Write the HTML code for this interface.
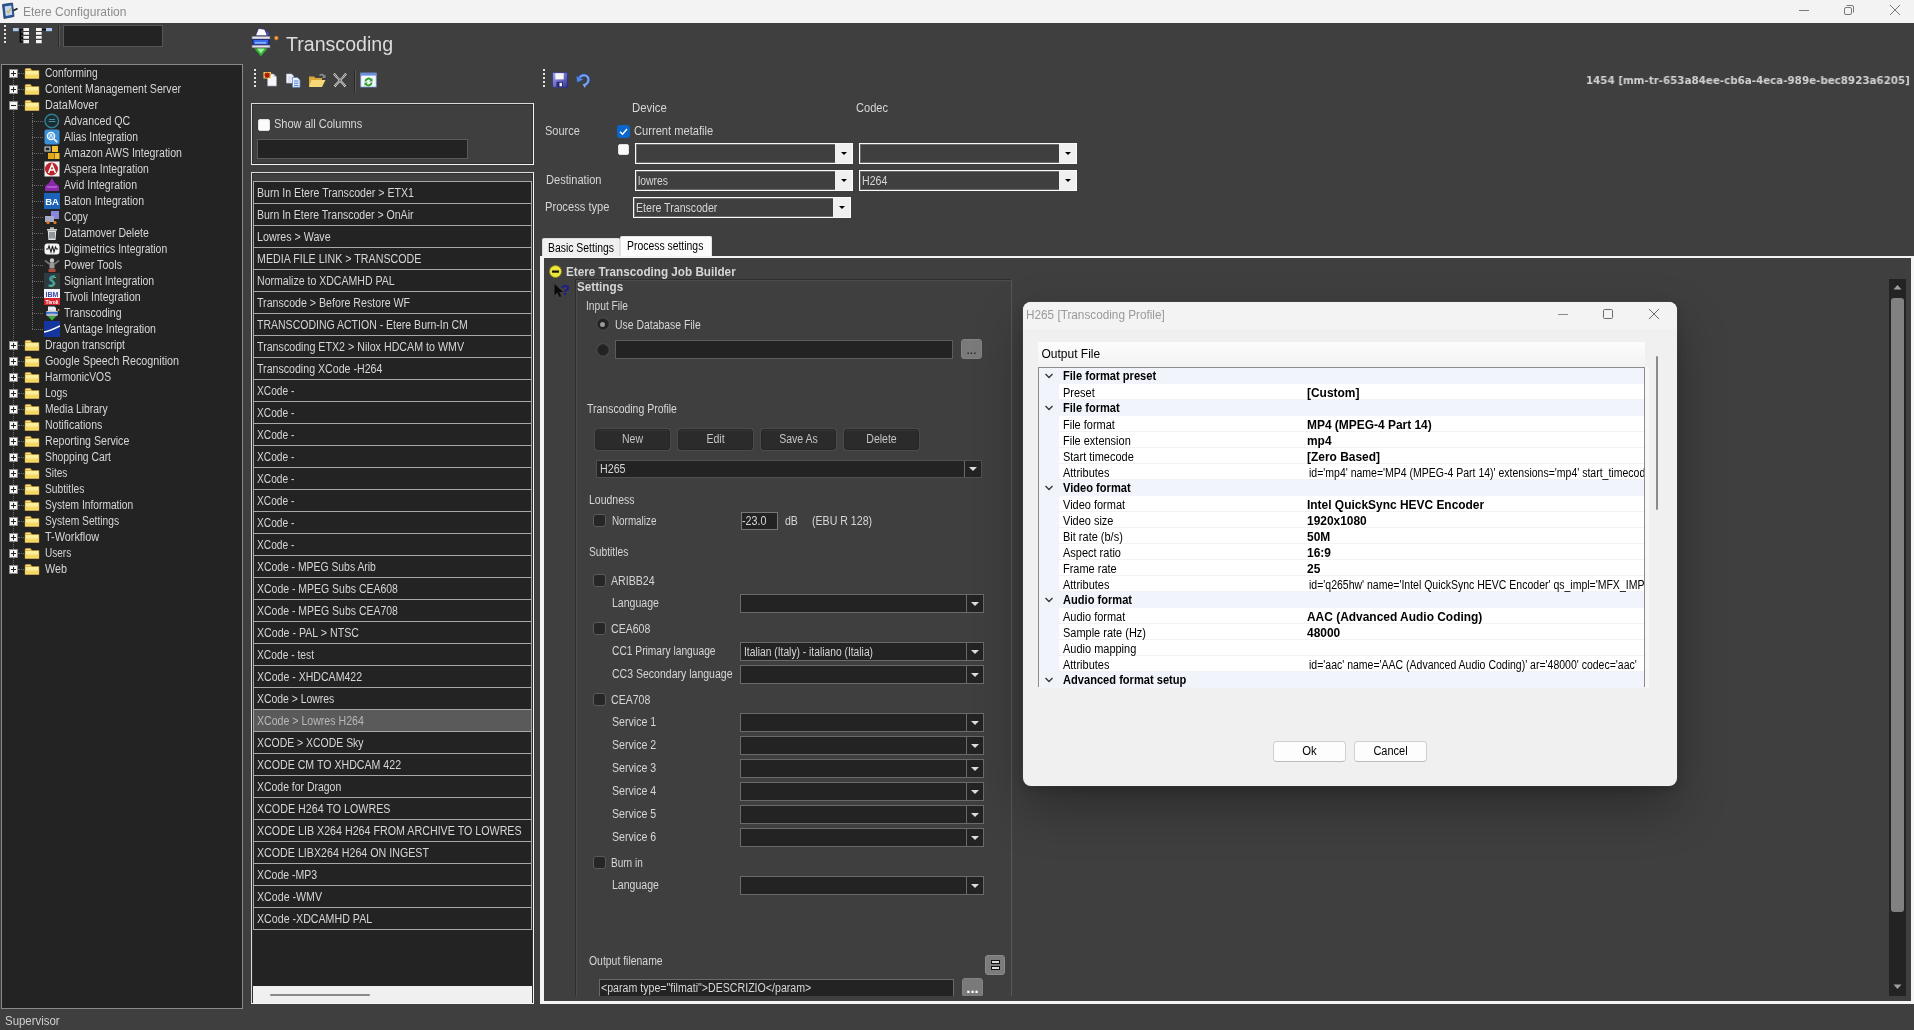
<!DOCTYPE html>
<html lang="en"><head><meta charset="utf-8"><title>Etere Configuration</title>
<style>
*{box-sizing:border-box;margin:0;padding:0}
html,body{width:1914px;height:1030px;overflow:hidden;background:#3f3f3f}
body{position:relative;font-family:"Liberation Sans",sans-serif;font-size:12px;color:#d6d6d6}
div,span,svg{position:absolute}
#app{left:0;top:0;width:1914px;height:1030px;will-change:transform}
.t{white-space:nowrap;line-height:16px;font-size:12px;transform:scaleX(0.878);transform-origin:0 50%;color:#d6d6d6}
.tb{white-space:nowrap;line-height:16px;font-size:12px;font-weight:bold;transform:scaleX(.975);transform-origin:0 50%;color:#d6d6d6}
.s{white-space:nowrap;line-height:16px;font-size:12px;color:#000}
.sb{white-space:nowrap;line-height:16px;font-size:12px;font-weight:bold;color:#000;transform-origin:0 50%}
.dk{background:#232323}
.cb{background:#262626;border:1px solid #5a5a5a;border-radius:3px}
.cbw{background:#fafafa;border-radius:2px;border:1px solid #e0e0e0}
.cmb{background:#3f3f3f;border:1px solid #fafafa;box-shadow:inset 0 0 0 1px rgba(255,255,255,.22)}
.cmb i{position:absolute;right:0;top:0;bottom:0;width:17px;background:#f0f0f0}
.cmb i:after,.dc i:after{content:"";position:absolute;left:50%;top:50%;margin:-1.500px 0 0 -3px;border:3px solid transparent;border-bottom-width:0;border-top-color:#000}
.dc{background:#232323;border:1px solid #6a6a6a}
.dc i{position:absolute;right:0;top:0;bottom:0;width:17px;border-left:1px solid #6a6a6a}
.dc i:after{border-top-color:#ddd;border-width:4px 4px 0;margin:-2px 0 0 -4px}
.btn{background:#2b2b2b;border:1px solid #262626;border-radius:3px;box-shadow:0 0 0 1px #4b4b4b,inset 0 1px 0 #353535}
.row{background:#232323;border:1px solid #a8a8a8}
.pm{width:9px;height:9px;background:#f4f4f4;border:1px solid #888}
.pm:before{content:"";position:absolute;left:1px;top:3px;width:5px;height:1px;background:#222}
.pl:after{content:"";position:absolute;left:3px;top:1px;width:1px;height:5px;background:#222}
.hd{border-top:1px dotted #6c6c6c;height:0}
.vd{border-left:1px dotted #6c6c6c;width:0}
.cat{background:#f1f4fa}
.wbtn{background:#fdfdfd;border:1px solid #d0d0d0;border-radius:4px;border-bottom-color:#bcbcbc}
</style></head>
<body>
<div id="app">
<div class="" style="left:0px;top:0px;width:1914px;height:23px;background:#f3f3f3"></div>
<svg style="left:1px;top:2px" width="18" height="18" viewBox="0 0 18 18"><path d="M1.500 2.500L11.500 1 13 14.500 3 16.500Z" fill="#2c5490" stroke="#1c3a6a" stroke-width=".8"/><path d="M3.600 4.600L10.300 3.600 11.300 12.800 4.800 14Z" fill="#c4d8f4"/><path d="M5.500 8.500L7.300 10.800 9.800 6.200" stroke="#c8b850" stroke-width="1.200" fill="none"/><path d="M12.500 8.500L16.500 6.500" stroke="#1a1a2a" stroke-width="1.700"/></svg>
<span class="s" style="left:23px;top:3.5px;color:#8c8c8c">Etere Configuration</span>
<svg style="left:1798px;top:5px" width="12" height="12" viewBox="0 0 12 12"><path d="M1 5.5H11" stroke="#7a7a7a" stroke-width="1"/></svg>
<svg style="left:1843px;top:4px" width="12" height="12" viewBox="0 0 12 12"><rect x="1.5" y="3.5" width="7" height="7" rx="1.5" fill="none" stroke="#7a7a7a"/><path d="M3.5 1.5H9Q10.5 1.5 10.5 3V8.5" fill="none" stroke="#7a7a7a"/></svg>
<svg style="left:1889px;top:4px" width="12" height="12" viewBox="0 0 12 12"><path d="M1 1L11 11M11 1L1 11" stroke="#7a7a7a" stroke-width="1"/></svg>
<div class="" style="left:4px;top:25px;width:2px;height:2px;background:#e4e4e4"></div>
<div class="" style="left:4px;top:29px;width:2px;height:2px;background:#e4e4e4"></div>
<div class="" style="left:4px;top:33px;width:2px;height:2px;background:#e4e4e4"></div>
<div class="" style="left:4px;top:37px;width:2px;height:2px;background:#e4e4e4"></div>
<div class="" style="left:4px;top:41px;width:2px;height:2px;background:#e4e4e4"></div>
<svg style="left:13px;top:27px" width="17" height="17" viewBox="0 0 17 17"><rect x="0" y="1" width="5.700" height="3.200" fill="#a8c8f0"/><path d="M7.300 2V15.500M6.700 2.600H10.400M7 7H10.400M7 11H10.400M7 14.900H10.400" stroke="#050505" stroke-width="1.300" fill="none"/><path d="M10.400 1H16V4H10.400ZM10.400 5H16V7.800H10.400ZM10.400 9H16V11.800H10.400ZM10.400 13H16V16.300H10.400Z" fill="#f4f4f4"/></svg>
<svg style="left:36px;top:27px" width="17" height="17" viewBox="0 0 17 17"><path d="M0 1H5.700V4H0ZM0 5H5.700V7.800H0ZM0 9H5.700V11.800H0ZM0 13H5.700V16.300H0Z" fill="#f4f4f4"/><path d="M6 2.600H10" stroke="#050505" stroke-width="1.300"/><rect x="10" y="1" width="6" height="3.200" fill="#a8c8f0"/></svg>
<div class="" style="left:58px;top:25px;width:1px;height:22px;background:#2a2a2a"></div>
<div class="" style="left:59px;top:25px;width:1px;height:22px;background:#555"></div>
<div class="dk" style="left:63px;top:25px;width:100px;height:22px;border:1px solid #555"></div>
<div class="dk" style="left:1px;top:64px;width:242px;height:945px;border:1px solid #8a8a8a"></div>
<div class="vd" style="left:13px;top:73px;width:0px;height:496px;"></div>
<div class="vd" style="left:32px;top:113px;width:0px;height:216px;"></div>
<div class="hd" style="left:18px;top:73px;width:6px;height:0px;"></div>
<div class="pm pl" style="left:9px;top:69px;width:9px;height:9px;"></div>
<svg style="left:24px;top:65px" width="16" height="16" viewBox="0 0 16 16"><path d="M.8 4.200V13.800H15.200V5.300H8L6.500 3.200H1.800Z" fill="#d4a83a"/><path d="M1.500 6H14.500V13.200H1.500Z" fill="#fbeea0"/><path d="M1.500 9.500H14.500V13.200H1.500Z" fill="#f4d866"/><path d="M1.800 3.800H6.200L7.400 5.300H1.800Z" fill="#f6e28c"/></svg>
<span class="t" style="left:44.5px;top:65px;;transform:scaleX(0.848);transform-origin:0 50%;">Conforming</span>
<div class="hd" style="left:18px;top:89px;width:6px;height:0px;"></div>
<div class="pm pl" style="left:9px;top:85px;width:9px;height:9px;"></div>
<svg style="left:24px;top:81px" width="16" height="16" viewBox="0 0 16 16"><path d="M.8 4.200V13.800H15.200V5.300H8L6.500 3.200H1.800Z" fill="#d4a83a"/><path d="M1.500 6H14.500V13.200H1.500Z" fill="#fbeea0"/><path d="M1.500 9.500H14.500V13.200H1.500Z" fill="#f4d866"/><path d="M1.800 3.800H6.200L7.400 5.300H1.800Z" fill="#f6e28c"/></svg>
<span class="t" style="left:44.5px;top:81px;;transform:scaleX(0.883);transform-origin:0 50%;">Content Management Server</span>
<div class="hd" style="left:18px;top:105px;width:6px;height:0px;"></div>
<div class="pm" style="left:9px;top:101px;width:9px;height:9px;"></div>
<svg style="left:24px;top:97px" width="16" height="16" viewBox="0 0 16 16"><path d="M.8 4.200V13.800H15.200V5.300H8L6.500 3.200H1.800Z" fill="#d4a83a"/><path d="M1.500 6H14.500V13.200H1.500Z" fill="#fbeea0"/><path d="M1.500 9.500H14.500V13.200H1.500Z" fill="#f4d866"/><path d="M1.800 3.800H6.200L7.400 5.300H1.800Z" fill="#f6e28c"/></svg>
<span class="t" style="left:44.5px;top:97px;;transform:scaleX(0.903);transform-origin:0 50%;">DataMover</span>
<div class="hd" style="left:32px;top:121px;width:11px;height:0px;"></div>
<svg style="left:43.5px;top:113px" width="16" height="16" viewBox="0 0 16 16"><circle cx="7.800" cy="8" r="6.800" fill="#1d2b33" stroke="#2f7f8f" stroke-width="1.500"/><path d="M4.5 8.5h7M5 6.5h6" stroke="#3f93a3" stroke-width="1.2"/></svg>
<span class="t" style="left:64px;top:113px;;transform:scaleX(0.887);transform-origin:0 50%;">Advanced QC</span>
<div class="hd" style="left:32px;top:137px;width:11px;height:0px;"></div>
<svg style="left:43.5px;top:129px" width="16" height="16" viewBox="0 0 16 16"><rect x="0.5" y="0.5" width="15" height="15" rx="2" fill="#3b8fd6"/><circle cx="7" cy="7" r="3.600" fill="#6ab0ec" stroke="#fff" stroke-width="1.300"/><path d="M5.600 8.800L7 5 8.400 8.800" stroke="#fff" stroke-width=".8" fill="none"/><path d="M9.800 9.800l3.400 3.400" stroke="#e8f2fc" stroke-width="1.700"/></svg>
<span class="t" style="left:64px;top:129px;;transform:scaleX(0.861);transform-origin:0 50%;">Alias Integration</span>
<div class="hd" style="left:32px;top:153px;width:11px;height:0px;"></div>
<svg style="left:43.5px;top:145px" width="16" height="16" viewBox="0 0 16 16"><rect x="8" y="1" width="6" height="6" fill="#f2c230"/><rect x="4" y="8" width="6" height="6" fill="#e0a818"/><rect x="10.5" y="8" width="5" height="6" fill="#f2c230"/><rect x="1" y="2" width="5" height="4" fill="none" stroke="#ddd" stroke-width="1"/></svg>
<span class="t" style="left:64px;top:145px;;transform:scaleX(0.883);transform-origin:0 50%;">Amazon AWS Integration</span>
<div class="hd" style="left:32px;top:169px;width:11px;height:0px;"></div>
<svg style="left:43.5px;top:161px" width="16" height="16" viewBox="0 0 16 16"><rect x="0.5" y="0.5" width="15" height="15" fill="#f4f4f4"/><circle cx="7.500" cy="8" r="6.500" fill="#b8242a"/><path d="M4.5 12L8 3.5 11.5 12M6 9h4" stroke="#fff" stroke-width="1.5" fill="none"/></svg>
<span class="t" style="left:64px;top:161px;;transform:scaleX(0.865);transform-origin:0 50%;">Aspera Integration</span>
<div class="hd" style="left:32px;top:185px;width:11px;height:0px;"></div>
<svg style="left:43.5px;top:177px" width="16" height="16" viewBox="0 0 16 16"><path d="M8 1L11 6 15 9V14H1V9L5 6Z" fill="#8a2aa8"/><path d="M3 10H13" stroke="#c66ae0" stroke-width="1.4"/></svg>
<span class="t" style="left:64px;top:177px;;transform:scaleX(0.878);transform-origin:0 50%;">Avid Integration</span>
<div class="hd" style="left:32px;top:201px;width:11px;height:0px;"></div>
<svg style="left:43.5px;top:193px" width="16" height="16" viewBox="0 0 16 16"><rect x="0" y="0" width="16" height="16" fill="#1b62b8"/><text x="8" y="12" font-family="Liberation Sans,sans-serif" font-weight="bold" font-size="9.5" text-anchor="middle" fill="#fff">BA</text></svg>
<span class="t" style="left:64px;top:193px;;transform:scaleX(0.876);transform-origin:0 50%;">Baton Integration</span>
<div class="hd" style="left:32px;top:217px;width:11px;height:0px;"></div>
<svg style="left:43.5px;top:209px" width="16" height="16" viewBox="0 0 16 16"><rect x="7" y="2" width="8" height="8" fill="#8a86d8"/><rect x="1" y="7" width="9" height="6" fill="#a9a9c8"/><circle cx="4" cy="13.5" r="1.6" fill="#e08020"/><circle cx="11" cy="13.5" r="1.6" fill="#e08020"/></svg>
<span class="t" style="left:64px;top:209px;;transform:scaleX(0.853);transform-origin:0 50%;">Copy</span>
<div class="hd" style="left:32px;top:233px;width:11px;height:0px;"></div>
<svg style="left:43.5px;top:225px" width="16" height="16" viewBox="0 0 16 16"><path d="M3 4H13V5.5H3Z" fill="#cfd4d6"/><path d="M6 2.2H10V4H6Z" fill="#aab0b3"/><path d="M3.8 5.5H12.2L11.6 15H4.4Z" fill="#dfe3e5"/><path d="M6 7V13.500M8 7V13.500M10 7V13.500" stroke="#50585c" stroke-width="1.100"/></svg>
<span class="t" style="left:64px;top:225px;;transform:scaleX(0.877);transform-origin:0 50%;">Datamover Delete</span>
<div class="hd" style="left:32px;top:249px;width:11px;height:0px;"></div>
<svg style="left:43.5px;top:241px" width="16" height="16" viewBox="0 0 16 16"><rect x="0.5" y="2.5" width="15" height="11" rx="3" fill="#f4f4f4"/><path d="M2 8H4L5 5 7 11 8.5 5 10 11 11.5 6 12.5 8H14" stroke="#222" stroke-width="1.1" fill="none"/></svg>
<span class="t" style="left:64px;top:241px;;transform:scaleX(0.864);transform-origin:0 50%;">Digimetrics Integration</span>
<div class="hd" style="left:32px;top:265px;width:11px;height:0px;"></div>
<svg style="left:43.5px;top:257px" width="16" height="16" viewBox="0 0 16 16"><circle cx="8" cy="3.5" r="2.2" fill="#c9c9c9"/><rect x="5.5" y="5.5" width="5" height="6" fill="#9a9a9a"/><path d="M1 3.5L5.5 7M15 3.5L10.5 7" stroke="#777" stroke-width="1.6"/><rect x="4.5" y="12" width="7" height="3" fill="#b04a3a"/></svg>
<span class="t" style="left:64px;top:257px;;transform:scaleX(0.890);transform-origin:0 50%;">Power Tools</span>
<div class="hd" style="left:32px;top:281px;width:11px;height:0px;"></div>
<svg style="left:43.5px;top:273px" width="16" height="16" viewBox="0 0 16 16"><rect x="0" y="0" width="16" height="16" fill="#2e3a3d"/><path d="M11 3.5C6 2.5 5 6.5 8 8S10 13.5 4.5 12.5" stroke="#3aa0b8" stroke-width="2.2" fill="none"/><path d="M12 4.5C7.5 4 7 7 9.5 8.5S11 14 6 13.5" stroke="#7ab648" stroke-width="1" fill="none"/></svg>
<span class="t" style="left:64px;top:273px;;transform:scaleX(0.872);transform-origin:0 50%;">Signiant Integration</span>
<div class="hd" style="left:32px;top:297px;width:11px;height:0px;"></div>
<svg style="left:43.5px;top:289px" width="16" height="16" viewBox="0 0 16 16"><rect x="0" y="0" width="16" height="9" fill="#f2f2f8"/><rect x="0" y="9" width="16" height="7" fill="#d8242c"/><text x="8" y="7.5" font-family="Liberation Sans,sans-serif" font-weight="bold" font-size="7" text-anchor="middle" fill="#3b4fa8">IBM</text><text x="8" y="14.5" font-family="Liberation Sans,sans-serif" font-weight="bold" font-size="5" text-anchor="middle" fill="#fff">Tivoli</text></svg>
<span class="t" style="left:64px;top:289px;;transform:scaleX(0.874);transform-origin:0 50%;">Tivoli Integration</span>
<div class="hd" style="left:32px;top:313px;width:11px;height:0px;"></div>
<svg style="left:43.5px;top:305px" width="16" height="16" viewBox="0 0 16 16"><path d="M4 1.5H10.5L12 3V6H4Z" fill="#e8e8f0"/><ellipse cx="8" cy="7" rx="6" ry="1.6" fill="#c8c8d0"/><rect x="2" y="7" width="12" height="3" fill="#2f6fd0"/><ellipse cx="8" cy="10" rx="6" ry="1.6" fill="#b8b8c0"/><path d="M4 11.5H12L8 15.5Z" fill="#37b837"/><circle cx="14.5" cy="5" r="1" fill="#f08a2a"/></svg>
<span class="t" style="left:64px;top:305px;;transform:scaleX(0.878);transform-origin:0 50%;">Transcoding</span>
<div class="hd" style="left:32px;top:329px;width:11px;height:0px;"></div>
<svg style="left:43.5px;top:321px" width="16" height="16" viewBox="0 0 16 16"><rect x="0" y="0" width="16" height="16" fill="#1436a0"/><path d="M0 11C6 10 10 8 16 5" stroke="#fff" stroke-width="1.4" fill="none"/></svg>
<span class="t" style="left:64px;top:321px;;transform:scaleX(0.886);transform-origin:0 50%;">Vantage Integration</span>
<div class="hd" style="left:18px;top:345px;width:6px;height:0px;"></div>
<div class="pm pl" style="left:9px;top:341px;width:9px;height:9px;"></div>
<svg style="left:24px;top:337px" width="16" height="16" viewBox="0 0 16 16"><path d="M.8 4.200V13.800H15.200V5.300H8L6.500 3.200H1.800Z" fill="#d4a83a"/><path d="M1.500 6H14.500V13.200H1.500Z" fill="#fbeea0"/><path d="M1.500 9.500H14.500V13.200H1.500Z" fill="#f4d866"/><path d="M1.800 3.800H6.200L7.400 5.300H1.800Z" fill="#f6e28c"/></svg>
<span class="t" style="left:44.5px;top:337px;;transform:scaleX(0.869);transform-origin:0 50%;">Dragon transcript</span>
<div class="hd" style="left:18px;top:361px;width:6px;height:0px;"></div>
<div class="pm pl" style="left:9px;top:357px;width:9px;height:9px;"></div>
<svg style="left:24px;top:353px" width="16" height="16" viewBox="0 0 16 16"><path d="M.8 4.200V13.800H15.200V5.300H8L6.500 3.200H1.800Z" fill="#d4a83a"/><path d="M1.500 6H14.500V13.200H1.500Z" fill="#fbeea0"/><path d="M1.500 9.500H14.500V13.200H1.500Z" fill="#f4d866"/><path d="M1.800 3.800H6.200L7.400 5.300H1.800Z" fill="#f6e28c"/></svg>
<span class="t" style="left:44.5px;top:353px;;transform:scaleX(0.897);transform-origin:0 50%;">Google Speech Recognition</span>
<div class="hd" style="left:18px;top:377px;width:6px;height:0px;"></div>
<div class="pm pl" style="left:9px;top:373px;width:9px;height:9px;"></div>
<svg style="left:24px;top:369px" width="16" height="16" viewBox="0 0 16 16"><path d="M.8 4.200V13.800H15.200V5.300H8L6.500 3.200H1.800Z" fill="#d4a83a"/><path d="M1.500 6H14.500V13.200H1.500Z" fill="#fbeea0"/><path d="M1.500 9.500H14.500V13.200H1.500Z" fill="#f4d866"/><path d="M1.800 3.800H6.200L7.400 5.300H1.800Z" fill="#f6e28c"/></svg>
<span class="t" style="left:44.5px;top:369px;;transform:scaleX(0.861);transform-origin:0 50%;">HarmonicVOS</span>
<div class="hd" style="left:18px;top:393px;width:6px;height:0px;"></div>
<div class="pm pl" style="left:9px;top:389px;width:9px;height:9px;"></div>
<svg style="left:24px;top:385px" width="16" height="16" viewBox="0 0 16 16"><path d="M.8 4.200V13.800H15.200V5.300H8L6.500 3.200H1.800Z" fill="#d4a83a"/><path d="M1.500 6H14.500V13.200H1.500Z" fill="#fbeea0"/><path d="M1.500 9.500H14.500V13.200H1.500Z" fill="#f4d866"/><path d="M1.800 3.800H6.200L7.400 5.300H1.800Z" fill="#f6e28c"/></svg>
<span class="t" style="left:44.5px;top:385px;;transform:scaleX(0.861);transform-origin:0 50%;">Logs</span>
<div class="hd" style="left:18px;top:409px;width:6px;height:0px;"></div>
<div class="pm pl" style="left:9px;top:405px;width:9px;height:9px;"></div>
<svg style="left:24px;top:401px" width="16" height="16" viewBox="0 0 16 16"><path d="M.8 4.200V13.800H15.200V5.300H8L6.500 3.200H1.800Z" fill="#d4a83a"/><path d="M1.500 6H14.500V13.200H1.500Z" fill="#fbeea0"/><path d="M1.500 9.500H14.500V13.200H1.500Z" fill="#f4d866"/><path d="M1.800 3.800H6.200L7.400 5.300H1.800Z" fill="#f6e28c"/></svg>
<span class="t" style="left:44.5px;top:401px;;transform:scaleX(0.861);transform-origin:0 50%;">Media Library</span>
<div class="hd" style="left:18px;top:425px;width:6px;height:0px;"></div>
<div class="pm pl" style="left:9px;top:421px;width:9px;height:9px;"></div>
<svg style="left:24px;top:417px" width="16" height="16" viewBox="0 0 16 16"><path d="M.8 4.200V13.800H15.200V5.300H8L6.500 3.200H1.800Z" fill="#d4a83a"/><path d="M1.500 6H14.500V13.200H1.500Z" fill="#fbeea0"/><path d="M1.500 9.500H14.500V13.200H1.500Z" fill="#f4d866"/><path d="M1.800 3.800H6.200L7.400 5.300H1.800Z" fill="#f6e28c"/></svg>
<span class="t" style="left:44.5px;top:417px;;transform:scaleX(0.876);transform-origin:0 50%;">Notifications</span>
<div class="hd" style="left:18px;top:441px;width:6px;height:0px;"></div>
<div class="pm pl" style="left:9px;top:437px;width:9px;height:9px;"></div>
<svg style="left:24px;top:433px" width="16" height="16" viewBox="0 0 16 16"><path d="M.8 4.200V13.800H15.200V5.300H8L6.500 3.200H1.800Z" fill="#d4a83a"/><path d="M1.500 6H14.500V13.200H1.500Z" fill="#fbeea0"/><path d="M1.500 9.500H14.500V13.200H1.500Z" fill="#f4d866"/><path d="M1.800 3.800H6.200L7.400 5.300H1.800Z" fill="#f6e28c"/></svg>
<span class="t" style="left:44.5px;top:433px;;transform:scaleX(0.884);transform-origin:0 50%;">Reporting Service</span>
<div class="hd" style="left:18px;top:457px;width:6px;height:0px;"></div>
<div class="pm pl" style="left:9px;top:453px;width:9px;height:9px;"></div>
<svg style="left:24px;top:449px" width="16" height="16" viewBox="0 0 16 16"><path d="M.8 4.200V13.800H15.200V5.300H8L6.500 3.200H1.800Z" fill="#d4a83a"/><path d="M1.500 6H14.500V13.200H1.500Z" fill="#fbeea0"/><path d="M1.500 9.500H14.500V13.200H1.500Z" fill="#f4d866"/><path d="M1.800 3.800H6.200L7.400 5.300H1.800Z" fill="#f6e28c"/></svg>
<span class="t" style="left:44.5px;top:449px;;transform:scaleX(0.860);transform-origin:0 50%;">Shopping Cart</span>
<div class="hd" style="left:18px;top:473px;width:6px;height:0px;"></div>
<div class="pm pl" style="left:9px;top:469px;width:9px;height:9px;"></div>
<svg style="left:24px;top:465px" width="16" height="16" viewBox="0 0 16 16"><path d="M.8 4.200V13.800H15.200V5.300H8L6.500 3.200H1.800Z" fill="#d4a83a"/><path d="M1.500 6H14.500V13.200H1.500Z" fill="#fbeea0"/><path d="M1.500 9.500H14.500V13.200H1.500Z" fill="#f4d866"/><path d="M1.800 3.800H6.200L7.400 5.300H1.800Z" fill="#f6e28c"/></svg>
<span class="t" style="left:44.5px;top:465px;;transform:scaleX(0.839);transform-origin:0 50%;">Sites</span>
<div class="hd" style="left:18px;top:489px;width:6px;height:0px;"></div>
<div class="pm pl" style="left:9px;top:485px;width:9px;height:9px;"></div>
<svg style="left:24px;top:481px" width="16" height="16" viewBox="0 0 16 16"><path d="M.8 4.200V13.800H15.200V5.300H8L6.500 3.200H1.800Z" fill="#d4a83a"/><path d="M1.500 6H14.500V13.200H1.500Z" fill="#fbeea0"/><path d="M1.500 9.500H14.500V13.200H1.500Z" fill="#f4d866"/><path d="M1.800 3.800H6.200L7.400 5.300H1.800Z" fill="#f6e28c"/></svg>
<span class="t" style="left:44.5px;top:481px;;transform:scaleX(0.854);transform-origin:0 50%;">Subtitles</span>
<div class="hd" style="left:18px;top:505px;width:6px;height:0px;"></div>
<div class="pm pl" style="left:9px;top:501px;width:9px;height:9px;"></div>
<svg style="left:24px;top:497px" width="16" height="16" viewBox="0 0 16 16"><path d="M.8 4.200V13.800H15.200V5.300H8L6.500 3.200H1.800Z" fill="#d4a83a"/><path d="M1.500 6H14.500V13.200H1.500Z" fill="#fbeea0"/><path d="M1.500 9.500H14.500V13.200H1.500Z" fill="#f4d866"/><path d="M1.800 3.800H6.200L7.400 5.300H1.800Z" fill="#f6e28c"/></svg>
<span class="t" style="left:44.5px;top:497px;;transform:scaleX(0.852);transform-origin:0 50%;">System Information</span>
<div class="hd" style="left:18px;top:521px;width:6px;height:0px;"></div>
<div class="pm pl" style="left:9px;top:517px;width:9px;height:9px;"></div>
<svg style="left:24px;top:513px" width="16" height="16" viewBox="0 0 16 16"><path d="M.8 4.200V13.800H15.200V5.300H8L6.500 3.200H1.800Z" fill="#d4a83a"/><path d="M1.500 6H14.500V13.200H1.500Z" fill="#fbeea0"/><path d="M1.500 9.500H14.500V13.200H1.500Z" fill="#f4d866"/><path d="M1.800 3.800H6.200L7.400 5.300H1.800Z" fill="#f6e28c"/></svg>
<span class="t" style="left:44.5px;top:513px;;transform:scaleX(0.855);transform-origin:0 50%;">System Settings</span>
<div class="hd" style="left:18px;top:537px;width:6px;height:0px;"></div>
<div class="pm pl" style="left:9px;top:533px;width:9px;height:9px;"></div>
<svg style="left:24px;top:529px" width="16" height="16" viewBox="0 0 16 16"><path d="M.8 4.200V13.800H15.200V5.300H8L6.500 3.200H1.800Z" fill="#d4a83a"/><path d="M1.500 6H14.500V13.200H1.500Z" fill="#fbeea0"/><path d="M1.500 9.500H14.500V13.200H1.500Z" fill="#f4d866"/><path d="M1.800 3.800H6.200L7.400 5.300H1.800Z" fill="#f6e28c"/></svg>
<span class="t" style="left:44.5px;top:529px;;transform:scaleX(0.906);transform-origin:0 50%;">T-Workflow</span>
<div class="hd" style="left:18px;top:553px;width:6px;height:0px;"></div>
<div class="pm pl" style="left:9px;top:549px;width:9px;height:9px;"></div>
<svg style="left:24px;top:545px" width="16" height="16" viewBox="0 0 16 16"><path d="M.8 4.200V13.800H15.200V5.300H8L6.500 3.200H1.800Z" fill="#d4a83a"/><path d="M1.500 6H14.500V13.200H1.500Z" fill="#fbeea0"/><path d="M1.500 9.500H14.500V13.200H1.500Z" fill="#f4d866"/><path d="M1.800 3.800H6.200L7.400 5.300H1.800Z" fill="#f6e28c"/></svg>
<span class="t" style="left:44.5px;top:545px;;transform:scaleX(0.836);transform-origin:0 50%;">Users</span>
<div class="hd" style="left:18px;top:569px;width:6px;height:0px;"></div>
<div class="pm pl" style="left:9px;top:565px;width:9px;height:9px;"></div>
<svg style="left:24px;top:561px" width="16" height="16" viewBox="0 0 16 16"><path d="M.8 4.200V13.800H15.200V5.300H8L6.500 3.200H1.800Z" fill="#d4a83a"/><path d="M1.500 6H14.500V13.200H1.500Z" fill="#fbeea0"/><path d="M1.500 9.500H14.500V13.200H1.500Z" fill="#f4d866"/><path d="M1.800 3.800H6.200L7.400 5.300H1.800Z" fill="#f6e28c"/></svg>
<span class="t" style="left:44.5px;top:561px;;transform:scaleX(0.899);transform-origin:0 50%;">Web</span>
<svg style="left:249px;top:26px" width="30" height="34" viewBox="0 0 30 34"><path d="M6.500 9.700L9.500 2.400 15.900 3.300 18.500 9.700Z" fill="#fbfbfd" stroke="#2a2a70" stroke-width=".7"/><path d="M15.900 3.300L20.600 8 18.500 9.700Z" fill="#5a5ad0" stroke="#2a2a70" stroke-width=".6"/><rect x="3.100" y="10.400" width="17.800" height="2.600" fill="#e2e2e8" stroke="#8a8a9a" stroke-width=".6"/><rect x="3.100" y="13.100" width="17.800" height="6" fill="#1a2a80"/><rect x="4.600" y="14" width="14.300" height="4.200" fill="#3a6ae8"/><rect x="6" y="16" width="11" height="1.600" fill="#8ab4f8"/><rect x="3.100" y="19.200" width="17.800" height="2.500" fill="#e2e2e8" stroke="#8a8a9a" stroke-width=".6"/><path d="M5.300 22.600H18.500L11.900 30.200Z" fill="#36b436"/><path d="M8 22.600H15.800L11.900 27.200Z" fill="#9af09a"/><circle cx="27.300" cy="12" r="2" fill="#f0a050" stroke="#a8601c" stroke-width=".6"/></svg>
<span class="t" style="left:286px;top:31.8px;font-size:20px;line-height:24px;transform:scaleX(.98);color:#dcdcdc">Transcoding</span>
<div class="" style="left:254px;top:69px;width:2px;height:2px;background:#e4e4e4"></div>
<div class="" style="left:254px;top:73px;width:2px;height:2px;background:#e4e4e4"></div>
<div class="" style="left:254px;top:77px;width:2px;height:2px;background:#e4e4e4"></div>
<div class="" style="left:254px;top:81px;width:2px;height:2px;background:#e4e4e4"></div>
<div class="" style="left:254px;top:85px;width:2px;height:2px;background:#e4e4e4"></div>
<svg style="left:263px;top:71px" width="15" height="16" viewBox="0 0 15 16"><path d="M4.500 3H10.500L13.500 6V15H4.500Z" fill="#f6f6fa" stroke="#a0a0b0" stroke-width=".7"/><path d="M10.500 3V6H13.500" fill="#c8c8dc"/><rect x=".5" y="1" width="7.500" height="6.500" fill="#f6cf6a"/><path d="M4.200 1.500V7M1.200 4.200H7.200M2 2L6.500 6.500M6.500 2L2 6.500" stroke="#a81800" stroke-width="1.300"/></svg>
<svg style="left:285px;top:73px" width="17" height="15" viewBox="0 0 17 15"><path d="M1.500 1H6.500L8.500 3V10H1.500Z" fill="#f2f5fa" stroke="#b4c0d4" stroke-width=".7"/><path d="M3 4H7M3 6H7M3 8H6" stroke="#c4ccdc" stroke-width=".9"/><path d="M7.500 4.500H12.500L15 7V14.300H7.500Z" fill="#eef3fb" stroke="#5a80c0" stroke-width=".8"/><path d="M9 8H13.500M9 10.200H13.500M9 12.400H13.500" stroke="#4a78c8" stroke-width="1"/></svg>
<svg style="left:308px;top:72px" width="19" height="17" viewBox="0 0 19 17"><path d="M1 4.500H6L7.500 6H14V15H1Z" fill="#d8a838"/><path d="M3.500 8H17.500L14 15H1Z" fill="#f6d878"/><path d="M11 3C13 1 15.500 1.500 16.500 3.500L17.500 2.500V6H14L15.200 4.800C14.500 3.500 13 3 12 4Z" fill="#8a8a8a"/></svg>
<svg style="left:332px;top:72px" width="16" height="16" viewBox="0 0 16 16"><path d="M2 1.500C5 6 10 10 13.500 14.500M14 1.500C11 6 6 10 2.500 14.500" stroke="#e4e4e4" stroke-width="2.200" fill="none"/><path d="M2 1.500C5 6 10 10 13.500 14.500M14 1.500C11 6 6 10 2.500 14.500" stroke="#3a3a3a" stroke-width=".8" fill="none"/></svg>
<div class="" style="left:354px;top:70px;width:1px;height:22px;background:#2a2a2a"></div>
<div class="" style="left:355px;top:70px;width:1px;height:22px;background:#585858"></div>
<svg style="left:360px;top:72px" width="17" height="16" viewBox="0 0 17 16"><rect x=".8" y="1" width="15.400" height="14" fill="#f4f7fc" stroke="#7a9ad8" stroke-width=".8"/><rect x="1" y="1" width="15" height="2.600" fill="#6a8ee0"/><path d="M4.500 9.500A4 4 0 0 1 11.500 7L12.500 6V9.500H9L10.300 8.200A2.500 2.500 0 0 0 6.300 9.500Z" fill="#2fa02f"/><path d="M12.500 10.500A4 4 0 0 1 5.500 13L4.500 14V10.500H8L6.700 11.800A2.500 2.500 0 0 0 10.700 10.500Z" fill="#2fa02f"/></svg>
<div class="" style="left:251px;top:103px;width:283px;height:62px;border:1px solid;border-color:#dcdcdc #f6f6f6 #f6f6f6 #dcdcdc"></div>
<div class="" style="left:252px;top:104px;width:281px;height:60px;border:1px solid #303030"></div>
<div class="cbw" style="left:258px;top:119px;width:12px;height:12px;"></div>
<span class="t" style="left:274px;top:116px;;transform:scaleX(0.919);transform-origin:0 50%;">Show all Columns</span>
<div class="dk" style="left:257px;top:139px;width:211px;height:20px;border:1px solid #5a5a5a"></div>
<div class="" style="left:251px;top:172px;width:283px;height:832px;border:1px solid;border-color:#dcdcdc #f6f6f6 #f6f6f6 #dcdcdc"></div>
<div class="" style="left:252px;top:173px;width:281px;height:830px;border:1px solid #303030;background:#232323"></div>
<div class="" style="left:253px;top:174px;width:279px;height:8px;background:#3f3f3f"></div>
<div class="row" style="left:253px;top:181px;width:279px;height:23px;"></div>
<span class="t" style="left:257px;top:184.5px;;transform:scaleX(0.883);transform-origin:0 50%;">Burn In Etere Transcoder &gt; ETX1</span>
<div class="row" style="left:253px;top:203px;width:279px;height:23px;"></div>
<span class="t" style="left:257px;top:206.5px;;transform:scaleX(0.877);transform-origin:0 50%;">Burn In Etere Transcoder &gt; OnAir</span>
<div class="row" style="left:253px;top:225px;width:279px;height:23px;"></div>
<span class="t" style="left:257px;top:228.5px;;transform:scaleX(0.892);transform-origin:0 50%;">Lowres &gt; Wave</span>
<div class="row" style="left:253px;top:247px;width:279px;height:23px;"></div>
<span class="t" style="left:257px;top:250.5px;;transform:scaleX(0.889);transform-origin:0 50%;">MEDIA FILE LINK &gt; TRANSCODE</span>
<div class="row" style="left:253px;top:269px;width:279px;height:23px;"></div>
<span class="t" style="left:257px;top:272.5px;;transform:scaleX(0.880);transform-origin:0 50%;">Normalize to XDCAMHD PAL</span>
<div class="row" style="left:253px;top:291px;width:279px;height:23px;"></div>
<span class="t" style="left:257px;top:294.5px;;transform:scaleX(0.887);transform-origin:0 50%;">Transcode &gt; Before Restore WF</span>
<div class="row" style="left:253px;top:313px;width:279px;height:23px;"></div>
<span class="t" style="left:257px;top:316.5px;;transform:scaleX(0.876);transform-origin:0 50%;">TRANSCODING ACTION - Etere Burn-In CM</span>
<div class="row" style="left:253px;top:335px;width:279px;height:23px;"></div>
<span class="t" style="left:257px;top:338.5px;;transform:scaleX(0.890);transform-origin:0 50%;">Transcoding ETX2 &gt; Nilox HDCAM to WMV</span>
<div class="row" style="left:253px;top:357px;width:279px;height:23px;"></div>
<span class="t" style="left:257px;top:360.5px;;transform:scaleX(0.885);transform-origin:0 50%;">Transcoding XCode -H264</span>
<div class="row" style="left:253px;top:379px;width:279px;height:23px;"></div>
<span class="t" style="left:257px;top:382.5px;;transform:scaleX(0.849);transform-origin:0 50%;">XCode -</span>
<div class="row" style="left:253px;top:401px;width:279px;height:23px;"></div>
<span class="t" style="left:257px;top:404.5px;;transform:scaleX(0.849);transform-origin:0 50%;">XCode -</span>
<div class="row" style="left:253px;top:423px;width:279px;height:23px;"></div>
<span class="t" style="left:257px;top:426.5px;;transform:scaleX(0.849);transform-origin:0 50%;">XCode -</span>
<div class="row" style="left:253px;top:445px;width:279px;height:23px;"></div>
<span class="t" style="left:257px;top:448.5px;;transform:scaleX(0.849);transform-origin:0 50%;">XCode -</span>
<div class="row" style="left:253px;top:467px;width:279px;height:23px;"></div>
<span class="t" style="left:257px;top:470.5px;;transform:scaleX(0.849);transform-origin:0 50%;">XCode -</span>
<div class="row" style="left:253px;top:489px;width:279px;height:23px;"></div>
<span class="t" style="left:257px;top:492.5px;;transform:scaleX(0.849);transform-origin:0 50%;">XCode -</span>
<div class="row" style="left:253px;top:511px;width:279px;height:23px;"></div>
<span class="t" style="left:257px;top:514.5px;;transform:scaleX(0.849);transform-origin:0 50%;">XCode -</span>
<div class="row" style="left:253px;top:533px;width:279px;height:23px;"></div>
<span class="t" style="left:257px;top:536.5px;;transform:scaleX(0.849);transform-origin:0 50%;">XCode -</span>
<div class="row" style="left:253px;top:555px;width:279px;height:23px;"></div>
<span class="t" style="left:257px;top:558.5px;;transform:scaleX(0.865);transform-origin:0 50%;">XCode - MPEG Subs Arib</span>
<div class="row" style="left:253px;top:577px;width:279px;height:23px;"></div>
<span class="t" style="left:257px;top:580.5px;;transform:scaleX(0.873);transform-origin:0 50%;">XCode - MPEG Subs CEA608</span>
<div class="row" style="left:253px;top:599px;width:279px;height:23px;"></div>
<span class="t" style="left:257px;top:602.5px;;transform:scaleX(0.873);transform-origin:0 50%;">XCode - MPEG Subs CEA708</span>
<div class="row" style="left:253px;top:621px;width:279px;height:23px;"></div>
<span class="t" style="left:257px;top:624.5px;;transform:scaleX(0.886);transform-origin:0 50%;">XCode - PAL &gt; NTSC</span>
<div class="row" style="left:253px;top:643px;width:279px;height:23px;"></div>
<span class="t" style="left:257px;top:646.5px;;transform:scaleX(0.855);transform-origin:0 50%;">XCode - test</span>
<div class="row" style="left:253px;top:665px;width:279px;height:23px;"></div>
<span class="t" style="left:257px;top:668.5px;;transform:scaleX(0.880);transform-origin:0 50%;">XCode - XHDCAM422</span>
<div class="row" style="left:253px;top:687px;width:279px;height:23px;"></div>
<span class="t" style="left:257px;top:690.5px;;transform:scaleX(0.868);transform-origin:0 50%;">XCode &gt; Lowres</span>
<div class="row" style="left:253px;top:709px;width:279px;height:23px;background:#5a5a5a"></div>
<span class="t" style="left:257px;top:712.5px;color:#b8b8b8;transform:scaleX(0.882);transform-origin:0 50%;">XCode &gt; Lowres H264</span>
<div class="row" style="left:253px;top:731px;width:279px;height:23px;"></div>
<span class="t" style="left:257px;top:734.5px;;transform:scaleX(0.871);transform-origin:0 50%;">XCODE &gt; XCODE Sky</span>
<div class="row" style="left:253px;top:753px;width:279px;height:23px;"></div>
<span class="t" style="left:257px;top:756.5px;;transform:scaleX(0.884);transform-origin:0 50%;">XCODE CM TO XHDCAM 422</span>
<div class="row" style="left:253px;top:775px;width:279px;height:23px;"></div>
<span class="t" style="left:257px;top:778.5px;;transform:scaleX(0.871);transform-origin:0 50%;">XCode for Dragon</span>
<div class="row" style="left:253px;top:797px;width:279px;height:23px;"></div>
<span class="t" style="left:257px;top:800.5px;;transform:scaleX(0.892);transform-origin:0 50%;">XCODE H264 TO LOWRES</span>
<div class="row" style="left:253px;top:819px;width:279px;height:23px;"></div>
<span class="t" style="left:257px;top:822.5px;;transform:scaleX(0.891);transform-origin:0 50%;">XCODE LIB X264 H264 FROM ARCHIVE TO LOWRES</span>
<div class="row" style="left:253px;top:841px;width:279px;height:23px;"></div>
<span class="t" style="left:257px;top:844.5px;;transform:scaleX(0.889);transform-origin:0 50%;">XCODE LIBX264 H264 ON INGEST</span>
<div class="row" style="left:253px;top:863px;width:279px;height:23px;"></div>
<span class="t" style="left:257px;top:866.5px;;transform:scaleX(0.876);transform-origin:0 50%;">XCode -MP3</span>
<div class="row" style="left:253px;top:885px;width:279px;height:23px;"></div>
<span class="t" style="left:257px;top:888.5px;;transform:scaleX(0.887);transform-origin:0 50%;">XCode -WMV</span>
<div class="row" style="left:253px;top:907px;width:279px;height:23px;"></div>
<span class="t" style="left:257px;top:910.5px;;transform:scaleX(0.887);transform-origin:0 50%;">XCode -XDCAMHD PAL</span>
<div class="" style="left:253px;top:986px;width:279px;height:17px;background:#f0f0f0"></div>
<div class="" style="left:270px;top:994px;width:100px;height:2px;background:#8a8a8a;border-radius:1px"></div>
<div class="" style="left:543px;top:69px;width:2px;height:2px;background:#e4e4e4"></div>
<div class="" style="left:543px;top:73px;width:2px;height:2px;background:#e4e4e4"></div>
<div class="" style="left:543px;top:77px;width:2px;height:2px;background:#e4e4e4"></div>
<div class="" style="left:543px;top:81px;width:2px;height:2px;background:#e4e4e4"></div>
<div class="" style="left:543px;top:85px;width:2px;height:2px;background:#e4e4e4"></div>
<svg style="left:552px;top:72px" width="16" height="16" viewBox="0 0 16 16"><defs><linearGradient id="sv" x1="0" y1="0" x2="1" y2="1"><stop offset="0" stop-color="#a8a8f4"/><stop offset="1" stop-color="#34349a"/></linearGradient></defs><path d="M.6 .6H15.400V15.400H2L.6 14Z" fill="url(#sv)" stroke="#2a2a80" stroke-width=".6"/><rect x="3.300" y="1.200" width="8.400" height="6.200" fill="#f4f6f4"/><rect x="4.500" y="9.800" width="6.500" height="5.200" fill="#2a2a70"/><rect x="7.500" y="10.800" width="2.500" height="3.500" fill="#f0f0f8"/></svg>
<svg style="left:575px;top:72px" width="17" height="16" viewBox="0 0 17 16"><path d="M4 6.500C6 2.500 11 2 13 5.500C14.500 8.500 12.500 12 9.500 13" stroke="#2a4a98" stroke-width="3.400" fill="none"/><path d="M4 6.500C6 2.500 11 2 13 5.500C14.500 8.500 12.500 12 9.500 13" stroke="#7aa6f0" stroke-width="2" fill="none"/><path d="M1.200 4L2.200 10.500 8.500 7.500Z" fill="#5a8ae4" stroke="#2a4a98" stroke-width=".6"/><path d="M8.500 12L10 15.200" stroke="#8ab0f4" stroke-width="1.500"/></svg>
<span class="tb" style="right:4px;top:72px;font-size:10.500px;font-family:'DejaVu Sans','Liberation Sans',sans-serif;transform:scaleX(.982);transform-origin:100% 50%;color:#d0d0d0" id="idtxt">1454 [mm-tr-653a84ee-cb6a-4eca-989e-bec8923a6205]</span>
<span class="t" style="left:632px;top:100px;;transform:scaleX(0.949);transform-origin:0 50%;">Device</span>
<span class="t" style="left:856px;top:100px;;transform:scaleX(0.925);transform-origin:0 50%;">Codec</span>
<span class="t" style="left:545px;top:123px;;transform:scaleX(0.915);transform-origin:0 50%;">Source</span>
<span class="t" style="left:546px;top:172px;;transform:scaleX(0.924);transform-origin:0 50%;">Destination</span>
<span class="t" style="left:545px;top:199px;;transform:scaleX(0.930);transform-origin:0 50%;">Process type</span>
<div class="" style="left:617px;top:125px;width:13px;height:13px;background:#0b66cc;border-radius:3px"><svg style="left:0;top:0" width="13" height="13" viewBox="0 0 13 13"><path d="M3 6.800L5.500 9.200 10 4" stroke="#fff" stroke-width="1.400" fill="none"/></svg></div>
<span class="t" style="left:634px;top:123px;;transform:scaleX(0.927);transform-origin:0 50%;">Current metafile</span>
<div class="cbw" style="left:618px;top:144px;width:11px;height:11px;"></div>
<div class="cmb" style="left:635px;top:143px;width:218px;height:21px;"><i></i></div>
<div class="cmb" style="left:859px;top:143px;width:218px;height:21px;"><i></i></div>
<div class="cmb" style="left:635px;top:170px;width:218px;height:21px;"><i></i></div>
<span class="t" style="left:638px;top:173px;;transform:scaleX(0.862);transform-origin:0 50%;">lowres</span>
<div class="cmb" style="left:859px;top:170px;width:218px;height:21px;"><i></i></div>
<span class="t" style="left:862px;top:173px;;transform:scaleX(0.885);transform-origin:0 50%;">H264</span>
<div class="cmb" style="left:633px;top:197px;width:218px;height:21px;"><i></i></div>
<span class="t" style="left:636px;top:200px;;transform:scaleX(0.884);transform-origin:0 50%;">Etere Transcoder</span>
<div class="" style="left:542px;top:238px;width:78px;height:20px;background:#f0f0f0;border:1px solid #dcdcdc;border-bottom:0;border-radius:2px 2px 0 0"></div>
<span class="t" style="left:548px;top:239.8px;color:#000;transform:scaleX(0.868);transform-origin:0 50%;">Basic Settings</span>
<div class="" style="left:620px;top:236px;width:92px;height:22px;background:#fbfbfb;border:1px solid #e4e4e4;border-bottom:0;border-radius:2px 2px 0 0"></div>
<span class="t" style="left:627px;top:237.8px;color:#000;transform:scaleX(0.867);transform-origin:0 50%;">Process settings</span>
<div class="" style="left:540px;top:256px;width:1374px;height:748px;border:3px solid #f4f4f4;border-top-width:2px;border-left-width:4px;background:#3f3f3f"></div>
<svg style="left:549px;top:265px" width="13" height="13" viewBox="0 0 13 13"><circle cx="6.500" cy="6.500" r="6" fill="#ece63a" stroke="#8a8620" stroke-width=".8"/><rect x="3" y="5.500" width="7" height="2.200" fill="#111"/></svg>
<span class="tb" style="left:566px;top:263.5px;">Etere Transcoding Job Builder</span>
<svg style="left:553px;top:283px" width="17" height="16" viewBox="0 0 17 16"><path d="M1.500 1V12L4.500 9.500 6.500 14 8.200 13.200 6.200 9H10Z" fill="#0a0a0a"/><text x="12.300" y="12.300" font-family="Liberation Sans,sans-serif" font-weight="bold" font-size="15" text-anchor="middle" fill="#18189a">?</text></svg>
<div class="" style="left:575px;top:279px;width:437px;height:730px;border:1px solid #2e2e2e;border-bottom:0;border-right-color:#585858"></div>
<div class="" style="left:576px;top:280px;width:436px;height:730px;border-left:1px solid #4c4c4c;border-top:1px solid #4c4c4c"></div>
<span class="tb" style="left:577px;top:279px;">Settings</span>
<span class="t" style="left:586px;top:298px;;transform:scaleX(0.851);transform-origin:0 50%;">Input File</span>
<div class="" style="left:596.5px;top:318px;width:12px;height:12px;background:#222;border-radius:50%;border:1px solid #303030;box-shadow:0 0 0 1px #4a4a4a"><div style="left:2.500px;top:2.500px;width:5px;height:5px;border-radius:50%;background:#9a9a9a"></div></div>
<span class="t" style="left:614.5px;top:317px;;transform:scaleX(0.868);transform-origin:0 50%;">Use Database File</span>
<div class="" style="left:596.5px;top:344px;width:12px;height:12px;background:#222;border-radius:50%;border:1px solid #303030;box-shadow:0 0 0 1px #4a4a4a"></div>
<div class="dk" style="left:615px;top:340px;width:338px;height:19px;border:1px solid #5c5c5c"></div>
<div class="" style="left:961px;top:339px;width:21px;height:20px;background:#7a7a7a;border-radius:3px;border:1px solid #838383"><span class="t" style="left:0;top:2px;width:19px;text-align:center;transform:none;color:#111;font-size:12px;">...</span></div>
<span class="t" style="left:586.5px;top:401px;;transform:scaleX(0.873);transform-origin:0 50%;">Transcoding Profile</span>
<div class="btn" style="left:595px;top:429px;width:75px;height:21px;"></div>
<span class="t" style="left:595px;top:431.300px;width:75px;text-align:center;transform-origin:50% 50%;color:#c4c4c4">New</span>
<div class="btn" style="left:678px;top:429px;width:75px;height:21px;"></div>
<span class="t" style="left:678px;top:431.300px;width:75px;text-align:center;transform-origin:50% 50%;color:#c4c4c4">Edit</span>
<div class="btn" style="left:761px;top:429px;width:75px;height:21px;"></div>
<span class="t" style="left:761px;top:431.300px;width:75px;text-align:center;transform-origin:50% 50%;color:#c4c4c4">Save As</span>
<div class="btn" style="left:844px;top:429px;width:75px;height:21px;"></div>
<span class="t" style="left:844px;top:431.300px;width:75px;text-align:center;transform-origin:50% 50%;color:#c4c4c4">Delete</span>
<div class="dc" style="left:596px;top:460px;width:386px;height:18px;border-color:#505050"><i></i></div>
<span class="t" style="left:599.5px;top:461px;;transform:scaleX(0.889);transform-origin:0 50%;">H265</span>
<span class="t" style="left:589px;top:492px;;transform:scaleX(0.874);transform-origin:0 50%;">Loudness</span>
<div class="cb" style="left:593px;top:514px;width:13px;height:13px;"></div>
<span class="t" style="left:611.5px;top:513px;;transform:scaleX(0.822);transform-origin:0 50%;">Normalize</span>
<div class="dk" style="left:740.5px;top:512px;width:37px;height:18px;border:1px solid #787878"></div>
<span class="t" style="left:742px;top:512.5px;;transform:scaleX(0.895);transform-origin:0 50%;">-23.0</span>
<span class="t" style="left:785px;top:512.5px;">dB</span>
<span class="t" style="left:812px;top:512.5px;;transform:scaleX(0.883);transform-origin:0 50%;">(EBU R 128)</span>
<span class="t" style="left:589px;top:544px;;transform:scaleX(0.854);transform-origin:0 50%;">Subtitles</span>
<div class="cb" style="left:593px;top:573.5px;width:13px;height:13px;"></div>
<span class="t" style="left:611px;top:572.5px;;transform:scaleX(0.885);transform-origin:0 50%;">ARIBB24</span>
<span class="t" style="left:612px;top:595px;;transform:scaleX(0.878);transform-origin:0 50%;">Language</span>
<div class="dc" style="left:740px;top:594px;width:244px;height:19px;"><i></i></div>
<div class="cb" style="left:593px;top:622.0px;width:13px;height:13px;"></div>
<span class="t" style="left:611px;top:621px;;transform:scaleX(0.881);transform-origin:0 50%;">CEA608</span>
<span class="t" style="left:612px;top:643px;;transform:scaleX(0.853);transform-origin:0 50%;">CC1 Primary language</span>
<div class="dc" style="left:740px;top:642px;width:244px;height:19px;"><i></i></div>
<span class="t" style="left:743.5px;top:643.5px;;transform:scaleX(0.856);transform-origin:0 50%;">Italian (Italy) - italiano (Italia)</span>
<span class="t" style="left:612px;top:666px;;transform:scaleX(0.877);transform-origin:0 50%;">CC3 Secondary language</span>
<div class="dc" style="left:740px;top:665px;width:244px;height:19px;"><i></i></div>
<div class="cb" style="left:593px;top:693.0px;width:13px;height:13px;"></div>
<span class="t" style="left:611px;top:692px;;transform:scaleX(0.881);transform-origin:0 50%;">CEA708</span>
<span class="t" style="left:612px;top:714px;;transform:scaleX(0.883);transform-origin:0 50%;">Service 1</span>
<div class="dc" style="left:740px;top:713px;width:244px;height:19px;"><i></i></div>
<span class="t" style="left:612px;top:737px;;transform:scaleX(0.883);transform-origin:0 50%;">Service 2</span>
<div class="dc" style="left:740px;top:736px;width:244px;height:19px;"><i></i></div>
<span class="t" style="left:612px;top:760px;;transform:scaleX(0.883);transform-origin:0 50%;">Service 3</span>
<div class="dc" style="left:740px;top:759px;width:244px;height:19px;"><i></i></div>
<span class="t" style="left:612px;top:783px;;transform:scaleX(0.883);transform-origin:0 50%;">Service 4</span>
<div class="dc" style="left:740px;top:782px;width:244px;height:19px;"><i></i></div>
<span class="t" style="left:612px;top:806px;;transform:scaleX(0.883);transform-origin:0 50%;">Service 5</span>
<div class="dc" style="left:740px;top:805px;width:244px;height:19px;"><i></i></div>
<span class="t" style="left:612px;top:829px;;transform:scaleX(0.883);transform-origin:0 50%;">Service 6</span>
<div class="dc" style="left:740px;top:828px;width:244px;height:19px;"><i></i></div>
<div class="cb" style="left:593px;top:855.5px;width:13px;height:13px;"></div>
<span class="t" style="left:611px;top:854.5px;;transform:scaleX(0.836);transform-origin:0 50%;">Burn in</span>
<span class="t" style="left:612px;top:877px;;transform:scaleX(0.878);transform-origin:0 50%;">Language</span>
<div class="dc" style="left:740px;top:876px;width:244px;height:19px;"><i></i></div>
<span class="t" style="left:588.5px;top:953px;;transform:scaleX(0.869);transform-origin:0 50%;">Output filename</span>
<div class="" style="left:984.5px;top:955px;width:20px;height:20px;background:#7c7c7c;border-radius:3px;border:1px solid #8a8a8a"><div style="left:5px;top:4px;width:9px;height:4px;border:1px solid #111;background:#ddd"></div><div style="left:5px;top:10px;width:9px;height:4px;border:1px solid #111;background:#ddd"></div></div>
<div class="dk" style="left:599px;top:979px;width:355px;height:18px;border:1px solid #6a6a6a"></div>
<span class="t" style="left:601px;top:980px;;transform:scaleX(0.885);transform-origin:0 50%;">&lt;param type="filmati"&gt;DESCRIZIO&lt;/param&gt;</span>
<div class="" style="left:962px;top:978px;width:21px;height:19px;background:#7a7a7a;border-radius:3px;border:1px solid #838383"><span class="t" style="left:0;top:1px;width:19px;text-align:center;transform:none;color:#fff;font-size:15px;font-weight:bold;">...</span></div>
<div class="" style="left:544px;top:996px;width:1367px;height:5px;background:#3f3f3f"></div>
<div class="" style="left:540px;top:1001px;width:1374px;height:3px;background:#f4f4f4"></div>
<div class="" style="left:0px;top:1004px;width:1914px;height:26px;background:#3f3f3f;z-index:0"></div>
<div class="dk" style="left:1px;top:1004px;width:242px;height:5px;border:1px solid #8a8a8a;border-top:0"></div>
<div class="dk" style="left:1889px;top:279px;width:17px;height:717px;"></div>
<svg style="left:1892px;top:283px" width="11" height="8" viewBox="0 0 11 8"><path d="M1.500 6.500L5.500 2 9.500 6.500Z" fill="#a0a0a0"/></svg>
<svg style="left:1892px;top:983px" width="11" height="8" viewBox="0 0 11 8"><path d="M1.500 1.500L5.500 6 9.500 1.500Z" fill="#a0a0a0"/></svg>
<div class="" style="left:1891px;top:298px;width:13px;height:614px;background:#818181;border-radius:3px"></div>
<span class="s" style="left:5px;top:1012.5px;color:#cfcfcf;transform:scaleX(.953);transform-origin:0 50%">Supervisor</span>
<div class="" style="left:1023px;top:302px;width:654px;height:484px;background:#f0f0f0;border-radius:8px;box-shadow:0 22px 50px rgba(0,0,0,.30),0 3px 10px rgba(0,0,0,.16),0 0 0 1px rgba(80,80,80,.55)"></div>
<div class="" style="left:1023px;top:302px;width:654px;height:27px;background:#f3f3f3;border-radius:8px 8px 0 0"></div>
<span class="s" style="left:1025.5px;top:306.5px;color:#9a9a9a;transform:scaleX(.98);transform-origin:0 50%">H265 [Transcoding Profile]</span>
<svg style="left:1557px;top:309px" width="12" height="12" viewBox="0 0 12 12"><path d="M1 5.500H11" stroke="#8a8a8a" stroke-width="1"/></svg>
<svg style="left:1602px;top:308px" width="12" height="12" viewBox="0 0 12 12"><rect x="1.500" y="1.500" width="9" height="9" rx="1" fill="none" stroke="#6a6a6a"/></svg>
<svg style="left:1648px;top:308px" width="12" height="12" viewBox="0 0 12 12"><path d="M1 1L11 11M11 1L1 11" stroke="#6a6a6a" stroke-width="1"/></svg>
<div class="" style="left:1038px;top:342px;width:607px;height:26px;background:linear-gradient(#fdfdfd,#f2f2f2)"></div>
<span class="s" style="left:1041.5px;top:346px;">Output File</span>
<div class="" style="left:1645px;top:367px;width:4px;height:321px;background:#f7f7f7"></div>
<div class="" style="left:1656px;top:356px;width:2px;height:154px;background:#8a8a8a;border-radius:1px"></div>
<div class="" style="left:1038px;top:367px;width:607px;height:320px;background:#fff;border:1px solid #8c8c8c;border-bottom:0"></div>
<div class="cat" style="left:1039px;top:368px;width:20px;height:319px;"></div>
<div class="cat" style="left:1039px;top:368px;width:605px;height:16px;"></div>
<div class="" style="left:1059px;top:399px;width:585px;height:1px;background:#f0f2f6"></div>
<div class="cat" style="left:1039px;top:400px;width:605px;height:16px;"></div>
<div class="" style="left:1059px;top:431px;width:585px;height:1px;background:#f0f2f6"></div>
<div class="" style="left:1059px;top:447px;width:585px;height:1px;background:#f0f2f6"></div>
<div class="" style="left:1059px;top:463px;width:585px;height:1px;background:#f0f2f6"></div>
<div class="" style="left:1059px;top:479px;width:585px;height:1px;background:#f0f2f6"></div>
<div class="cat" style="left:1039px;top:480px;width:605px;height:16px;"></div>
<div class="" style="left:1059px;top:511px;width:585px;height:1px;background:#f0f2f6"></div>
<div class="" style="left:1059px;top:527px;width:585px;height:1px;background:#f0f2f6"></div>
<div class="" style="left:1059px;top:543px;width:585px;height:1px;background:#f0f2f6"></div>
<div class="" style="left:1059px;top:559px;width:585px;height:1px;background:#f0f2f6"></div>
<div class="" style="left:1059px;top:575px;width:585px;height:1px;background:#f0f2f6"></div>
<div class="" style="left:1059px;top:591px;width:585px;height:1px;background:#f0f2f6"></div>
<div class="cat" style="left:1039px;top:592px;width:605px;height:16px;"></div>
<div class="" style="left:1059px;top:623px;width:585px;height:1px;background:#f0f2f6"></div>
<div class="" style="left:1059px;top:639px;width:585px;height:1px;background:#f0f2f6"></div>
<div class="" style="left:1059px;top:655px;width:585px;height:1px;background:#f0f2f6"></div>
<div class="" style="left:1059px;top:671px;width:585px;height:1px;background:#f0f2f6"></div>
<div class="cat" style="left:1039px;top:672px;width:605px;height:16px;"></div>
<svg style="left:1044px;top:372px" width="10" height="8" viewBox="0 0 10 8"><path d="M1.500 2L5 5.500 8.500 2" stroke="#333" stroke-width="1.300" fill="none"/></svg>
<span class="sb" style="left:1063px;top:368px;transform:scaleX(.925)">File format preset</span>
<span class="s" style="left:1063px;top:384.5px;transform:scaleX(.915);transform-origin:0 50%">Preset</span>
<span class="sb" style="left:1307px;top:384.5px;transform:scaleX(.995)">[Custom]</span>
<svg style="left:1044px;top:404px" width="10" height="8" viewBox="0 0 10 8"><path d="M1.500 2L5 5.500 8.500 2" stroke="#333" stroke-width="1.300" fill="none"/></svg>
<span class="sb" style="left:1063px;top:400px;transform:scaleX(.925)">File format</span>
<span class="s" style="left:1063px;top:416.5px;transform:scaleX(.915);transform-origin:0 50%">File format</span>
<span class="sb" style="left:1307px;top:416.5px;transform:scaleX(.995)">MP4 (MPEG-4 Part 14)</span>
<span class="s" style="left:1063px;top:432.5px;transform:scaleX(.915);transform-origin:0 50%">File extension</span>
<span class="sb" style="left:1307px;top:432.5px;transform:scaleX(.995)">mp4</span>
<span class="s" style="left:1063px;top:448.5px;transform:scaleX(.915);transform-origin:0 50%">Start timecode</span>
<span class="sb" style="left:1307px;top:448.5px;transform:scaleX(.995)">[Zero Based]</span>
<span class="s" style="left:1063px;top:464.5px;transform:scaleX(.915);transform-origin:0 50%">Attributes</span>
<span class="s" style="left:1309px;top:464.5px;width:383px;overflow:hidden;transform:scaleX(.875);transform-origin:0 50%">id='mp4' name='MP4 (MPEG-4 Part 14)' extensions='mp4' start_timecod</span>
<svg style="left:1044px;top:484px" width="10" height="8" viewBox="0 0 10 8"><path d="M1.500 2L5 5.500 8.500 2" stroke="#333" stroke-width="1.300" fill="none"/></svg>
<span class="sb" style="left:1063px;top:480px;transform:scaleX(.925)">Video format</span>
<span class="s" style="left:1063px;top:496.5px;transform:scaleX(.915);transform-origin:0 50%">Video format</span>
<span class="sb" style="left:1307px;top:496.5px;transform:scaleX(.995)">Intel QuickSync HEVC Encoder</span>
<span class="s" style="left:1063px;top:512.5px;transform:scaleX(.915);transform-origin:0 50%">Video size</span>
<span class="sb" style="left:1307px;top:512.5px;transform:scaleX(.995)">1920x1080</span>
<span class="s" style="left:1063px;top:528.5px;transform:scaleX(.915);transform-origin:0 50%">Bit rate (b/s)</span>
<span class="sb" style="left:1307px;top:528.5px;transform:scaleX(.995)">50M</span>
<span class="s" style="left:1063px;top:544.5px;transform:scaleX(.915);transform-origin:0 50%">Aspect ratio</span>
<span class="sb" style="left:1307px;top:544.5px;transform:scaleX(.995)">16:9</span>
<span class="s" style="left:1063px;top:560.5px;transform:scaleX(.915);transform-origin:0 50%">Frame rate</span>
<span class="sb" style="left:1307px;top:560.5px;transform:scaleX(.995)">25</span>
<span class="s" style="left:1063px;top:576.5px;transform:scaleX(.915);transform-origin:0 50%">Attributes</span>
<span class="s" style="left:1309px;top:576.5px;width:383px;overflow:hidden;transform:scaleX(.875);transform-origin:0 50%">id='q265hw' name='Intel QuickSync HEVC Encoder' qs_impl='MFX_IMP</span>
<svg style="left:1044px;top:596px" width="10" height="8" viewBox="0 0 10 8"><path d="M1.500 2L5 5.500 8.500 2" stroke="#333" stroke-width="1.300" fill="none"/></svg>
<span class="sb" style="left:1063px;top:592px;transform:scaleX(.925)">Audio format</span>
<span class="s" style="left:1063px;top:608.5px;transform:scaleX(.915);transform-origin:0 50%">Audio format</span>
<span class="sb" style="left:1307px;top:608.5px;transform:scaleX(.995)">AAC (Advanced Audio Coding)</span>
<span class="s" style="left:1063px;top:624.5px;transform:scaleX(.915);transform-origin:0 50%">Sample rate (Hz)</span>
<span class="sb" style="left:1307px;top:624.5px;transform:scaleX(.995)">48000</span>
<span class="s" style="left:1063px;top:640.5px;transform:scaleX(.915);transform-origin:0 50%">Audio mapping</span>
<span class="sb" style="left:1307px;top:640.5px;transform:scaleX(.995)"></span>
<span class="s" style="left:1063px;top:656.5px;transform:scaleX(.915);transform-origin:0 50%">Attributes</span>
<span class="s" style="left:1309px;top:656.5px;width:383px;overflow:hidden;transform:scaleX(.875);transform-origin:0 50%">id='aac' name='AAC (Advanced Audio Coding)' ar='48000' codec='aac'</span>
<svg style="left:1044px;top:676px" width="10" height="8" viewBox="0 0 10 8"><path d="M1.500 2L5 5.500 8.500 2" stroke="#333" stroke-width="1.300" fill="none"/></svg>
<span class="sb" style="left:1063px;top:672px;transform:scaleX(.925)">Advanced format setup</span>
<div class="wbtn" style="left:1273px;top:741px;width:73px;height:21px;"></div>
<span class="s" style="left:1273px;top:743px;width:73px;text-align:center;transform:scaleX(.94)">Ok</span>
<div class="wbtn" style="left:1354px;top:741px;width:73px;height:21px;"></div>
<span class="s" style="left:1354px;top:743px;width:73px;text-align:center;transform:scaleX(.915)">Cancel</span>
</div>
</body></html>
